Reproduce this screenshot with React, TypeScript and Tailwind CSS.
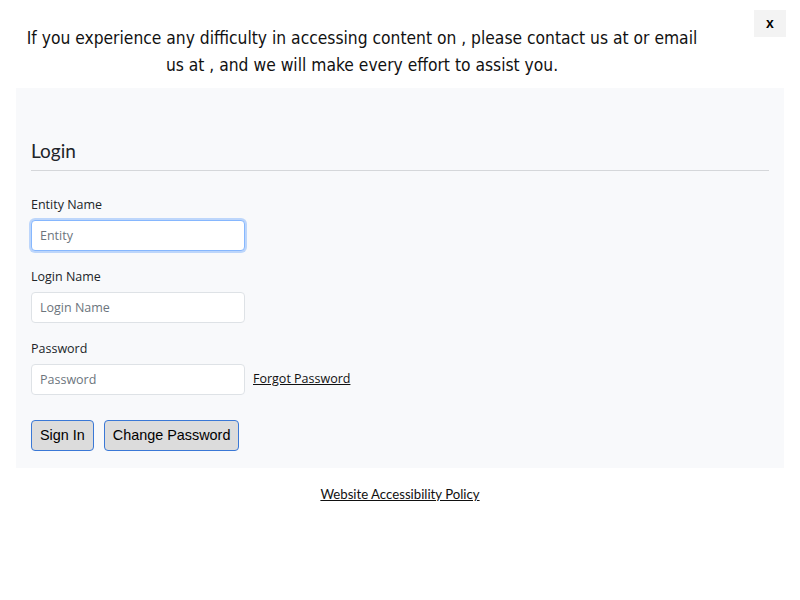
import React from "react";

const banner = "font-['DejaVu_Sans',sans-serif] font-stretch-condensed";
const ui = "font-['Open_Sans','Noto_Sans',sans-serif]";

function Field({
  label,
  placeholder,
  focused,
  type = "text",
  children,
}: {
  label: string;
  placeholder: string;
  focused?: boolean;
  type?: string;
  children?: React.ReactNode;
}) {
  return (
    <div className="mb-[17px]">
      <label className={`${ui} block text-[12.5px] text-[#212529] mb-[6px] leading-[18px]`}>{label}</label>
      <div className="flex items-center gap-2">
        <input
          type={type}
          placeholder={placeholder}
          className={`${ui} w-[214px] h-[31px] px-[8px] rounded-[4px] bg-white text-[12.5px] text-[#212529] placeholder:text-[#6c757d] outline-none border ${
            focused
              ? "border-[#86b7fe] shadow-[0_0_0_2px_rgba(13,110,253,0.25)]"
              : "border-[#dee2e6]"
          }`}
        />
        {children}
      </div>
    </div>
  );
}

export default function App() {
  return (
    <main className="min-h-screen bg-white">
      {/* Accessibility notice */}
      <div className="relative pt-[25px] pb-[9px]">
        <p className={`${banner} w-[724px] text-center text-[17.3px] leading-[27px] text-[#111] whitespace-nowrap`}>
          If you experience any difficulty in accessing content on , please contact us at or email
          <br />
          us at , and we will make every effort to assist you.
        </p>
        <button className="absolute right-[14px] top-[10px] w-[32px] h-[27px] bg-[#f3f3f3] text-[14px] font-bold text-black font-['Liberation_Sans',sans-serif]">
          x
        </button>
      </div>

      {/* Login panel */}
      <section className="mx-[16px] bg-[#f8f9fb] px-[15px] pt-[50px] pb-[17px]">
        <h1 className="font-['Lato','Open_Sans',sans-serif] text-[19px] leading-[26px] text-[#212529] pb-[6px] border-b border-[#d5d7da]">
          Login
        </h1>
        <div className="pt-[25px]">
          <Field label="Entity Name" placeholder="Entity" focused />
          <Field label="Login Name" placeholder="Login Name" />
          <Field label="Password" placeholder="Password" type="password">
            <a href="#" className={`${ui} text-[12.5px] text-[#111] underline`}>
              Forgot Password
            </a>
          </Field>
        </div>
        <div className="flex gap-[10px] pt-[8px]">
          <button className="h-[31px] px-[8px] rounded-[4px] bg-[#dcdcdc] border border-[#3a78d6] text-[14.4px] text-black font-['Liberation_Sans',sans-serif]">
            Sign In
          </button>
          <button className="h-[31px] px-[8px] rounded-[4px] bg-[#dcdcdc] border border-[#3a78d6] text-[14.4px] text-black font-['Liberation_Sans',sans-serif]">
            Change Password
          </button>
        </div>
      </section>

      <div className="pt-[13px] text-center">
        <a href="#" className="font-['Lato','Open_Sans',sans-serif] text-[13.2px] text-[#111] underline">
          Website Accessibility Policy
        </a>
      </div>
    </main>
  );
}
